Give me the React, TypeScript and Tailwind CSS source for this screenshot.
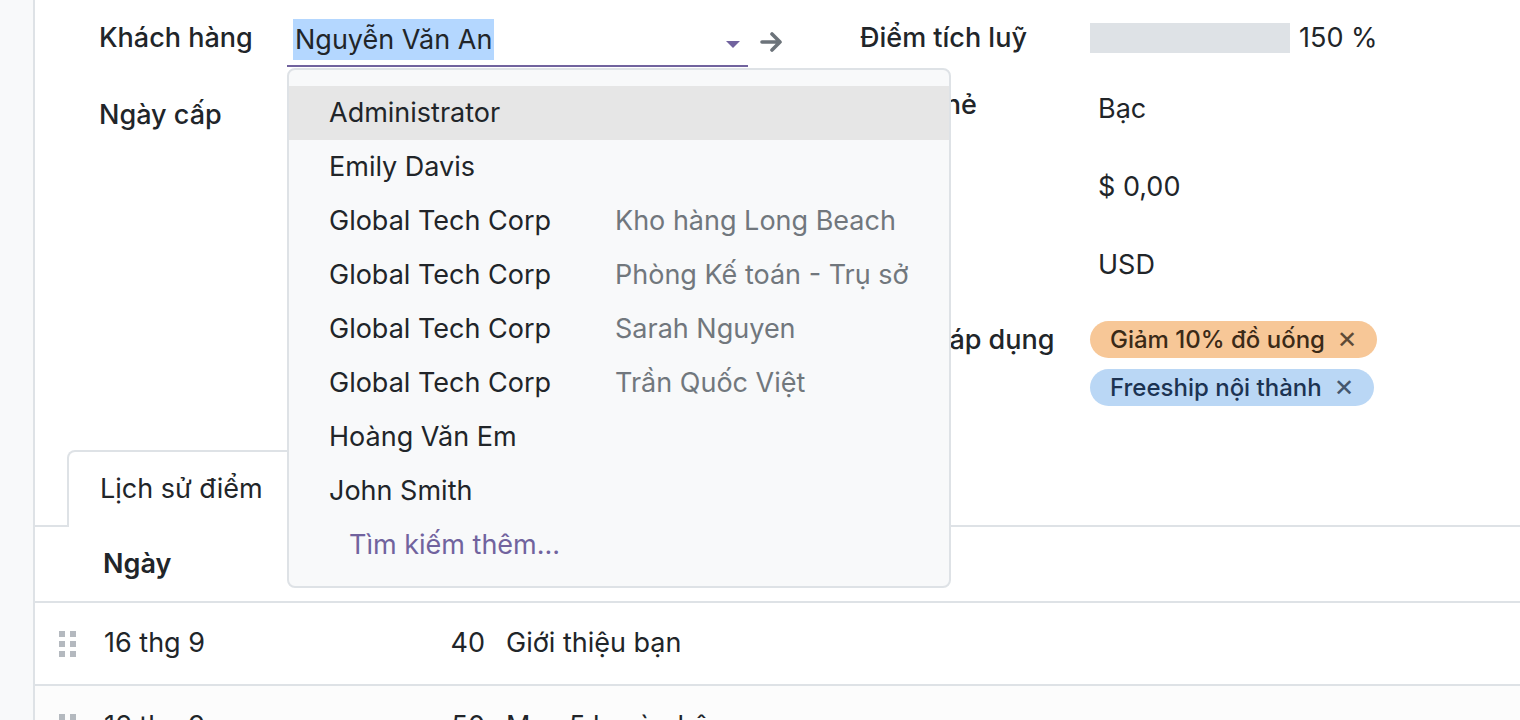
import React from 'react';

const suggestions: { name: string; sub?: string }[] = [
  { name: 'Administrator' },
  { name: 'Emily Davis' },
  { name: 'Global Tech Corp', sub: 'Kho hàng Long Beach' },
  { name: 'Global Tech Corp', sub: 'Phòng Kế toán - Trụ sở' },
  { name: 'Global Tech Corp', sub: 'Sarah Nguyen' },
  { name: 'Global Tech Corp', sub: 'Trần Quốc Việt' },
  { name: 'Hoàng Văn Em' },
  { name: 'John Smith' },
];

const DragHandle: React.FC = () => (
  <div className="grid grid-cols-2 gap-[4px] w-[17px]">
    {[0, 1, 2, 3, 4, 5].map((i) => (
      <span key={i} className="w-[6px] h-[6px] bg-[#b4b9bf]" />
    ))}
  </div>
);

const Tag: React.FC<{ label: string; tone: 'orange' | 'blue' }> = ({ label, tone }) => (
  <span
    className={[
      'inline-flex items-center h-[37px] rounded-full pl-[20px] pr-[20px] text-[24px] font-medium',
      tone === 'orange' ? 'bg-[#f7c797] text-[#3b2a17]' : 'bg-[#bad7f5] text-[#1c3352]',
    ].join(' ')}
  >
    {label}
    <span className={`ml-[12px] text-[24px] leading-none ${tone === 'orange' ? 'text-[#5e4a36]' : 'text-[#44566e]'}`}>✕</span>
  </span>
);

export default function App() {
  return (
    <div
      className="w-[1520px] h-[720px] overflow-hidden flex bg-white text-[#212529] text-[27px]"
      style={{ fontFamily: 'Inter, "Noto Sans", sans-serif' }}
    >
      {/* sidebar strip */}
      <div className="w-[35px] shrink-0 bg-[#f8f9fa] border-r-2 border-[#dee2e6]" />

      <div className="flex-1 flex flex-col">
        {/* form */}
        <div className="h-[450px] shrink-0 flex pl-[64px]">
          {/* left group */}
          <div className="w-[761px] flex flex-col">
            <div className="h-[76px] flex items-start">
              <div className="w-[188px] mt-[20px] leading-[36px] font-medium">Khách hàng</div>
              <div className="relative">
                <div className="w-[461px] h-[67px] pt-[19px] border-b-2 border-[#71639e] flex items-start">
                  <span className="ml-[6px] h-[41px] leading-[41px] bg-[#b4d7ff] px-[2px]">Nguyễn Văn An</span>
                  <span className="ml-auto mr-[8px] mt-[22px] w-0 h-0 border-l-[7px] border-r-[7px] border-t-[7px] border-l-transparent border-r-transparent border-t-[#71639e]" />
                </div>
                {/* autocomplete dropdown */}
                <div className="absolute left-0 top-full mt-[1px] w-[664px] z-10 bg-[#f8f9fa] border-2 border-[#dee2e6] rounded-[8px] pt-[16px] pb-[14px]">
                  {suggestions.map((s, i) => (
                    <div
                      key={i}
                      className={`h-[54px] flex items-center pl-[40px] ${i === 0 ? 'bg-[#e6e6e6]' : ''}`}
                    >
                      <span className="w-[286px] shrink-0">{s.name}</span>
                      {s.sub && <span className="text-[#71777d]">{s.sub}</span>}
                    </div>
                  ))}
                  <div className="h-[54px] flex items-center pl-[60px] text-[#71639e]">Tìm kiếm thêm...</div>
                </div>
              </div>
              <svg className="ml-[12px] mt-[31px]" width="24" height="22" viewBox="0 0 24 22" fill="none">
                <path d="M2 11h18M12 3l8 8-8 8" stroke="#6c737a" strokeWidth="3.6" strokeLinecap="round" strokeLinejoin="round" />
              </svg>
            </div>
            <div className="flex items-start">
              <div className="w-[188px] mt-[21px] leading-[36px] font-medium">Ngày cấp</div>
            </div>
          </div>

          {/* right group */}
          <div className="flex flex-col">
            <div className="h-[76px] flex items-center">
              <div className="w-[230px] font-medium">Điểm tích luỹ</div>
              <div className="w-[200px] h-[30px] bg-[#dee2e6]" />
              <span className="ml-[9px]">150 %</span>
            </div>
            <div className="h-[66px] flex items-center">
              <div className="w-[230px] font-medium -mt-[8px]">Hạng thẻ</div>
              <span className="ml-[8px]">Bạc</span>
            </div>
            <div className="h-[90px] flex items-center">
              <div className="w-[230px]" />
              <span className="ml-[8px]">$ 0,00</span>
            </div>
            <div className="h-[66px] flex items-center">
              <div className="w-[230px]" />
              <span className="ml-[8px]">USD</span>
            </div>
            <div className="flex items-start pt-[23px]">
              <div className="w-[230px] font-medium mt-[1px] leading-[36px]">Ưu đãi áp dụng</div>
              <div className="flex flex-col items-start gap-[11px]">
                <Tag label="Giảm 10% đồ uống" tone="orange" />
                <Tag label="Freeship nội thành" tone="blue" />
              </div>
            </div>
          </div>
        </div>

        {/* notebook tabs */}
        <div className="flex shrink-0 pl-[32px] border-b-2 border-[#dee2e6]">
          <div className="h-[77px] -mb-[2px] bg-white border-2 border-b-0 border-[#dee2e6] rounded-tl-[8px] px-[31px] flex items-center">
            Lịch sử điểm
          </div>
        </div>

        {/* points table */}
        <div className="flex flex-col shrink-0">
          <div className="h-[76px] shrink-0 flex items-center border-b-2 border-[#dee2e6] font-semibold">
            <div className="w-[68px]" />
            <div className="w-[316px]">Ngày</div>
          </div>
          {[
            { d: '16 thg 9', p: '40', t: 'Giới thiệu bạn' },
            { d: '16 thg 9', p: '50', t: 'Mua 5 ly cà phê' },
          ].map((r, i) => (
            <div
              key={i}
              className={`h-[83px] shrink-0 flex items-center border-b-2 border-[#dee2e6] ${i % 2 ? 'bg-[#fcfcfc]' : ''}`}
            >
              <div className="w-[69px] pl-[24px]">
                <DragHandle />
              </div>
              <div className="w-[315px]">{r.d}</div>
              <div className="w-[66px] text-right">{r.p}</div>
              <div className="pl-[21px]">{r.t}</div>
            </div>
          ))}
        </div>
      </div>
    </div>
  );
}
